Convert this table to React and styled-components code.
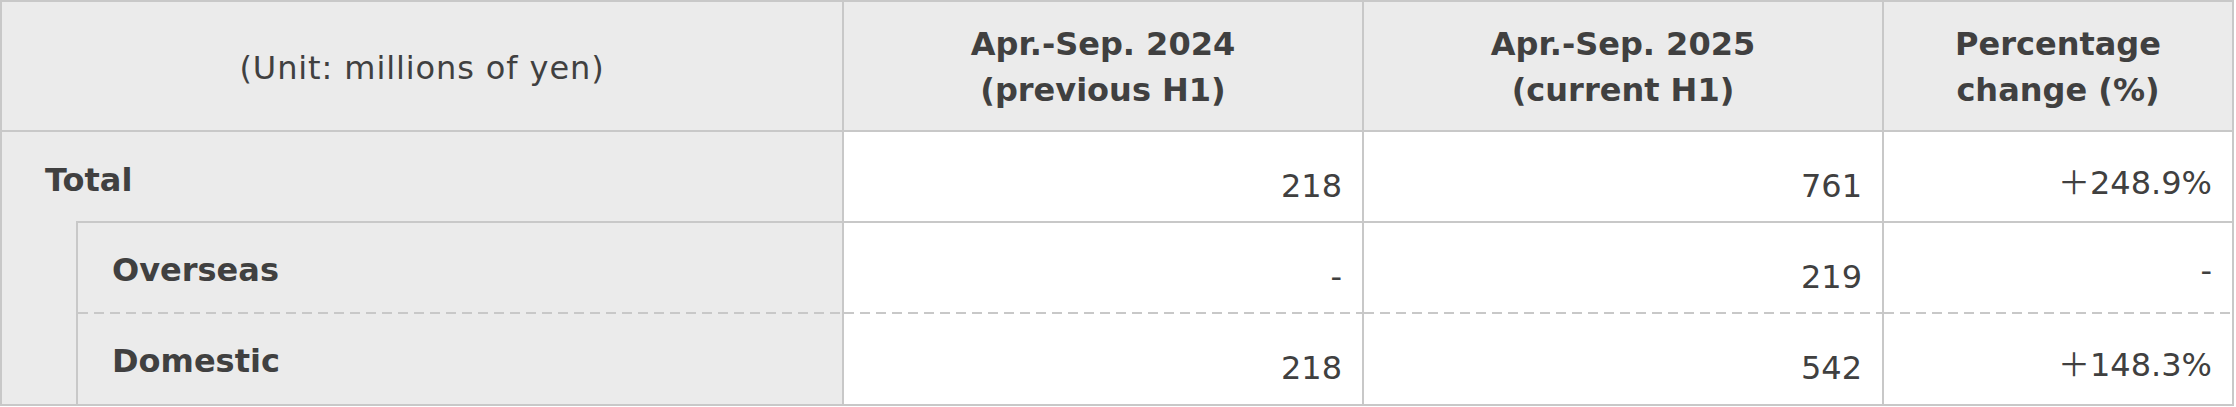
import React from "react";
import styled, { createGlobalStyle } from "styled-components";

const GlobalStyle = createGlobalStyle`
  html, body {
    margin: 0;
    padding: 0;
    background: #ffffff;
  }
  body {
    font-family: "DejaVu Sans", "Noto Sans CJK JP", sans-serif;
    color: #404040;
  }
`;

const rows = [
  { label: "Total", prev: "218", cur: "761", change: "＋248.9%" },
  { label: "Overseas", prev: "-", cur: "219", change: "-" },
  { label: "Domestic", prev: "218", cur: "542", change: "＋148.3%" },
];

const App = () => {
  return (
    <>
      <GlobalStyle />
      <Table>
        <UnitCell>(Unit: millions of yen)</UnitCell>
        <HeadCell>
          Apr.-Sep. 2024
          <br />
          (previous H1)
        </HeadCell>
        <HeadCell>
          Apr.-Sep. 2025
          <br />
          (current H1)
        </HeadCell>
        <HeadCell>
          Percentage
          <br />
          change (%)
        </HeadCell>

        {/* 合計行 */}
        <TotalLabel>{rows[0].label}</TotalLabel>
        <NumCell noBottom>{rows[0].prev}</NumCell>
        <NumCell noBottom>{rows[0].cur}</NumCell>
        <NumCell noBottom isRate>{rows[0].change}</NumCell>

        {/* 内訳 */}
        <Indent />
        <SubLabel dashed first>{rows[1].label}</SubLabel>
        <NumCell dashed first>{rows[1].prev}</NumCell>
        <NumCell dashed first>{rows[1].cur}</NumCell>
        <NumCell dashed first isRate>{rows[1].change}</NumCell>

        <SubLabel>{rows[2].label}</SubLabel>
        <NumCell>{rows[2].prev}</NumCell>
        <NumCell>{rows[2].cur}</NumCell>
        <NumCell isRate>{rows[2].change}</NumCell>
      </Table>
    </>
  );
};

export default App;

const Table = styled.div`
  display: grid;
  grid-template-columns: 76px 766px 520px 520px 350px;
  grid-template-rows: 130px 89px 93px 92px;
  width: fit-content;
  border-top: 2px solid #c8c8c8;
  border-left: 2px solid #c8c8c8;
  font-size: 32px;
`;

const Cell = styled.div`
  box-sizing: border-box;
  display: flex;
  align-items: center;
  border-right: 2px solid #c8c8c8;
`;

const HeadCell = styled(Cell)`
  justify-content: center;
  text-align: center;
  background: #ebebeb;
  border-bottom: 2px solid #c8c8c8;
  font-weight: bold;
  line-height: 46px;
  padding-top: 2px;
`;

const UnitCell = styled(HeadCell)`
  grid-column: 1 / span 2;
  font-weight: normal;
  letter-spacing: 0.9px;
  padding-top: 4px;
`;

const TotalLabel = styled(Cell)`
  grid-column: 1 / span 2;
  background: #ebebeb;
  font-weight: bold;
  padding: 6px 0 0 43px;
`;

const Indent = styled(Cell)`
  grid-column: 1;
  grid-row: 3 / span 2;
  background: #ebebeb;
  border-bottom: 2px solid #c8c8c8;
`;

const dashLine = `repeating-linear-gradient(90deg, #c8c8c8 0 10px, transparent 10px 16px) left bottom / 100% 2px no-repeat`;

const SubLabel = styled(Cell)`
  background: ${(p) => (p.dashed ? `${dashLine}, #ebebeb` : "#ebebeb")};
  border-top: ${(p) => (p.first ? "2px solid #c8c8c8" : "none")};
  border-bottom: ${(p) => (p.dashed ? "none" : "2px solid #c8c8c8")};
  padding: ${(p) => (p.dashed ? "4px 0 2px 34px" : "4px 0 0 34px")};
  font-weight: bold;
`;

const NumCell = styled(Cell)`
  justify-content: flex-end;
  background: ${(p) => (p.dashed ? `${dashLine}, #ffffff` : "#ffffff")};
  border-top: ${(p) => (p.first ? "2px solid #c8c8c8" : "none")};
  border-bottom: ${(p) =>
    p.dashed || p.noBottom ? "none" : "2px solid #c8c8c8"};
  padding-right: 20px;
  padding-top: ${(p) => (p.isRate ? "6px" : "18px")};
  padding-bottom: ${(p) => (p.dashed ? "2px" : "0")};
`;
